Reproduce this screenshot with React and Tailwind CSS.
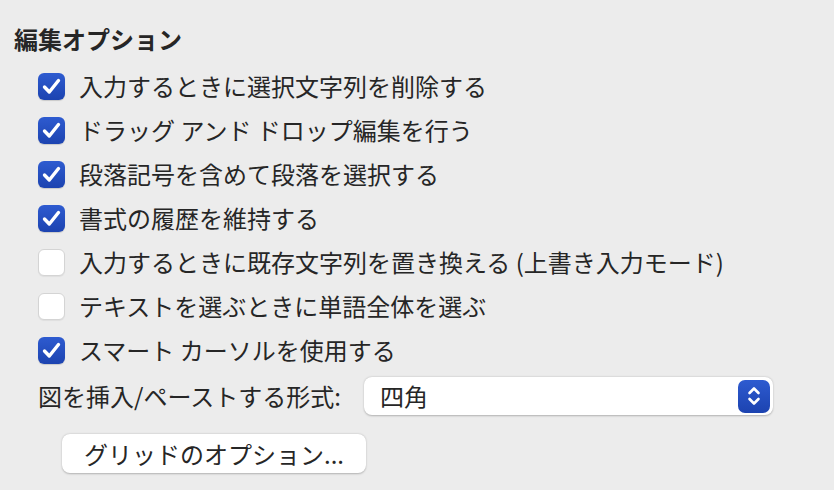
import React from 'react';

const OPTIONS = [
  { label: '入力するときに選択文字列を削除する', checked: true },
  { label: 'ドラッグ アンド ドロップ編集を行う', checked: true },
  { label: '段落記号を含めて段落を選択する', checked: true },
  { label: '書式の履歴を維持する', checked: true },
  { label: '入力するときに既存文字列を置き換える (上書き入力モード)', checked: false },
  { label: 'テキストを選ぶときに単語全体を選ぶ', checked: false },
  { label: 'スマート カーソルを使用する', checked: true },
];

function Checkbox({ checked }) {
  if (!checked) {
    return (
      <div className="w-[27px] h-[27px] rounded-[6px] bg-white border border-[#d4d4d4] shadow-[0_1px_1px_rgba(0,0,0,0.06)] shrink-0" />
    );
  }
  return (
    <div className="w-[27px] h-[27px] rounded-[6px] bg-gradient-to-b from-[#2e5bd0] to-[#1c43b0] flex items-center justify-center shrink-0 shadow-[0_1px_1px_rgba(0,0,0,0.15)]">
      <svg width="21" height="21" viewBox="0 0 21 21">
        <path d="M3.5 11 L8.3 16 L17.5 4.5" fill="none" stroke="white" strokeWidth="3.4" strokeLinecap="round" strokeLinejoin="round" />
      </svg>
    </div>
  );
}

export default function App() {
  return (
    <div
      className="w-[834px] h-[490px] bg-[#ececec] text-[#262626] overflow-hidden pt-[17px]"
      style={{ fontFamily: '"Noto Sans CJK JP", "Noto Sans", sans-serif' }}
    >
      {/* Title */}
      <div className="h-[44px] leading-[44px] pl-[14px] text-[24px] font-bold mb-[3px]">
        編集オプション
      </div>

      {/* Checkbox rows */}
      <div className="pl-[38px]">
        {OPTIONS.map((opt) => (
          <div key={opt.label} className="h-[44px] flex items-center gap-[14px]">
            <Checkbox checked={opt.checked} />
            <span className="text-[24px] leading-none whitespace-nowrap">{opt.label}</span>
          </div>
        ))}
      </div>

      {/* Insert/paste format */}
      <div className="pl-[38px] mt-[5px] flex items-center h-[38px]">
        <span className="w-[326px] text-[24px] leading-none whitespace-nowrap">図を挿入/ペーストする形式:</span>
        <div className="w-[409px] h-[38px] bg-white rounded-[8px] shadow-[0_0.5px_2px_rgba(0,0,0,0.25)] flex items-center justify-between pl-[16px] pr-[3px]">
          <span className="text-[24px] leading-none">四角</span>
          <div className="w-[32px] h-[33px] rounded-[7px] bg-gradient-to-b from-[#2e5bd0] to-[#1c43b0] flex items-center justify-center">
            <svg width="18" height="24" viewBox="0 0 18 24">
              <path d="M4.5 9 L9 4.5 L13.5 9" fill="none" stroke="white" strokeWidth="2.6" strokeLinecap="round" strokeLinejoin="round" />
              <path d="M4.5 15 L9 19.5 L13.5 15" fill="none" stroke="white" strokeWidth="2.6" strokeLinecap="round" strokeLinejoin="round" />
            </svg>
          </div>
        </div>
      </div>

      {/* Grid options button */}
      <div className="pl-[62px] mt-[19px]">
        <button className="w-[304px] h-[39px] bg-white rounded-[8px] shadow-[0_0.5px_2px_rgba(0,0,0,0.25)] text-[24px] leading-none text-[#262626] whitespace-nowrap">
          グリッドのオプション...
        </button>
      </div>
    </div>
  );
}
